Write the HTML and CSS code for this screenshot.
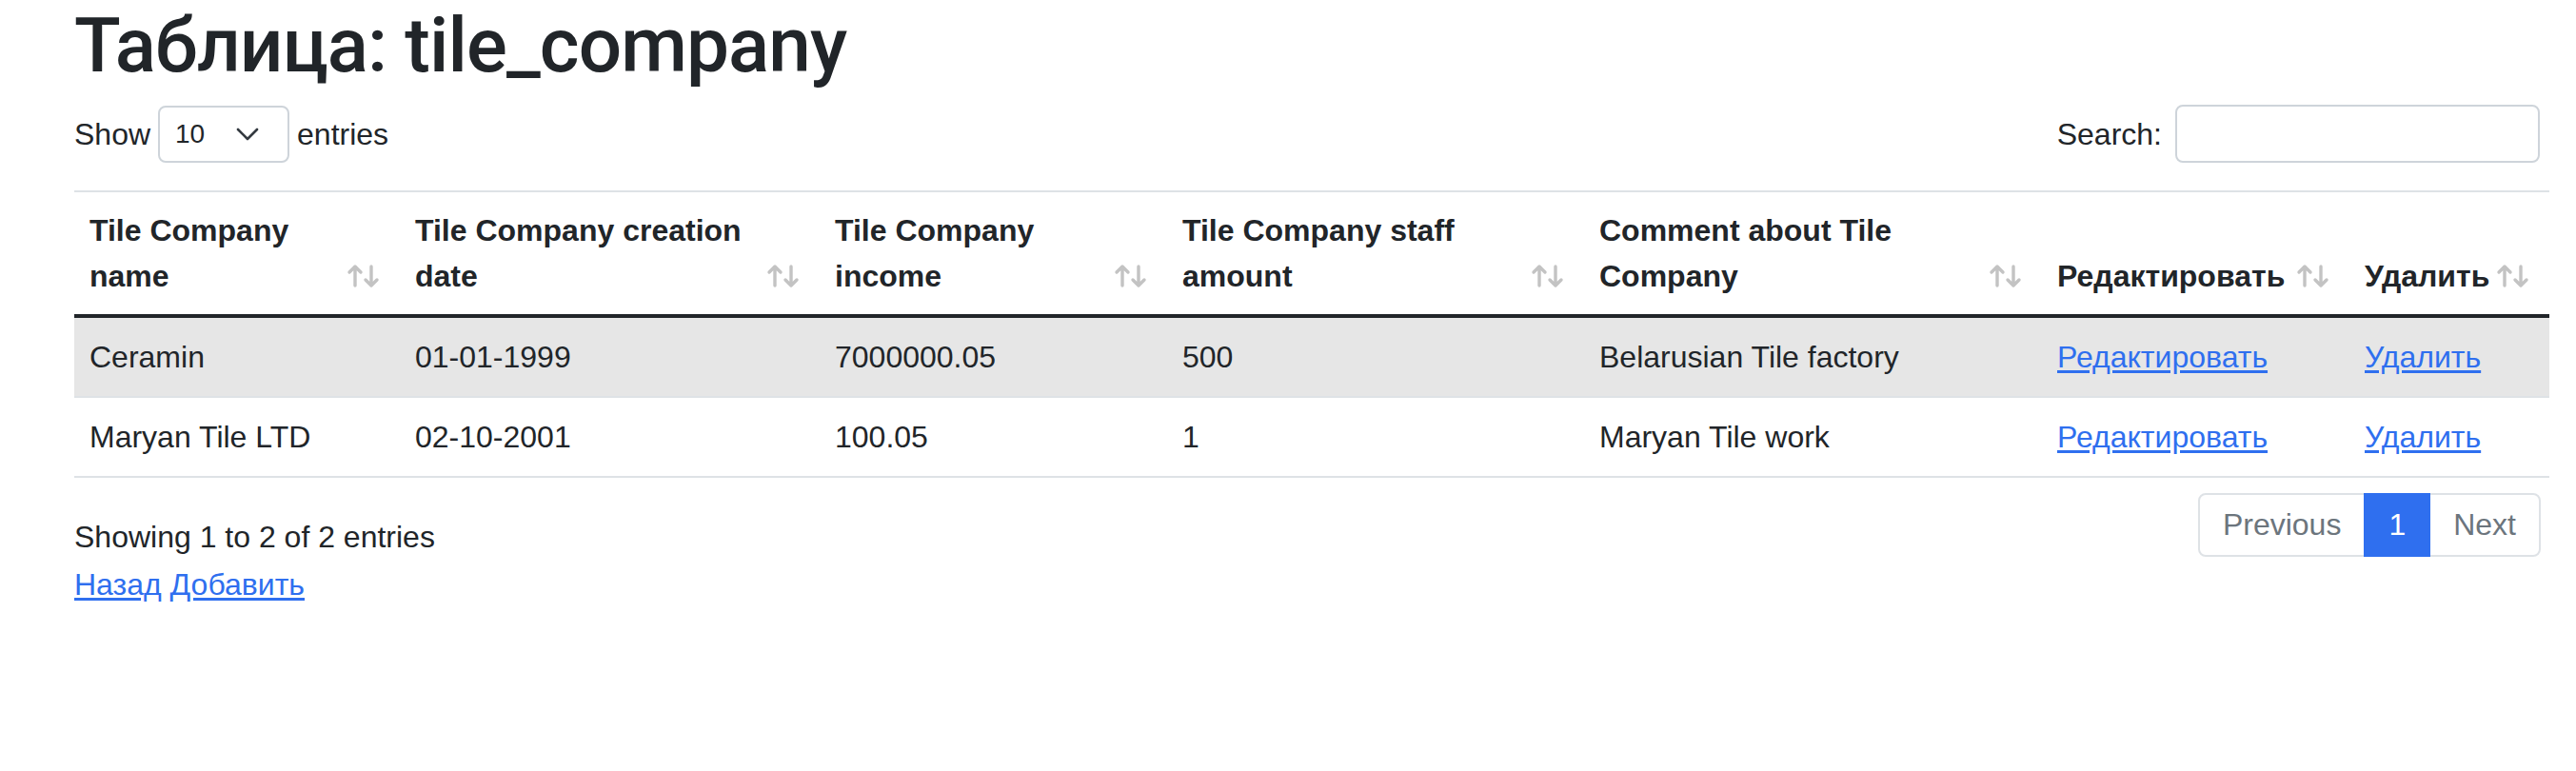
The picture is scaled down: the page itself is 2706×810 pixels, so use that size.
FILE: index.html
```html
<!DOCTYPE html>
<html lang="ru">
<head>
<meta charset="utf-8">
<title>Таблица: tile_company</title>
<link rel="stylesheet" href="styles.css">
</head>
<body>
<div class="page">
  <h1 class="title">Таблица: tile_company</h1>

  <div class="dt-top">
    <div class="dt-length">Show <span class="select"><span class="select-value">10</span><svg class="chev" width="24" height="14" viewBox="0 0 24 14"><polyline points="2,2 12,12 22,2" fill="none" stroke="#343a40" stroke-width="2.6" stroke-linecap="round" stroke-linejoin="round"/></svg></span> entries</div>
    <div class="dt-search">Search: <span class="search-input"></span></div>
  </div>

  <table class="dt">
    <colgroup>
      <col class="c1"><col class="c2"><col class="c3"><col class="c4"><col class="c5"><col class="c6"><col class="c7">
    </colgroup>
    <thead>
      <tr>
        <th>Tile Company name<svg class="sort" width="36" height="26" viewBox="0 0 36 26"><g fill="none" stroke="#c3c3c3" stroke-width="3.4" stroke-linecap="round" stroke-linejoin="round"><path d="M9 23V3M3 9l6-6 6 6"/><path d="M26 3v20M20 17l6 6 6-6"/></g></svg></th>
        <th>Tile Company creation date<svg class="sort" width="36" height="26" viewBox="0 0 36 26"><g fill="none" stroke="#c3c3c3" stroke-width="3.4" stroke-linecap="round" stroke-linejoin="round"><path d="M9 23V3M3 9l6-6 6 6"/><path d="M26 3v20M20 17l6 6 6-6"/></g></svg></th>
        <th>Tile Company income<svg class="sort" width="36" height="26" viewBox="0 0 36 26"><g fill="none" stroke="#c3c3c3" stroke-width="3.4" stroke-linecap="round" stroke-linejoin="round"><path d="M9 23V3M3 9l6-6 6 6"/><path d="M26 3v20M20 17l6 6 6-6"/></g></svg></th>
        <th>Tile Company staff amount<svg class="sort" width="36" height="26" viewBox="0 0 36 26"><g fill="none" stroke="#c3c3c3" stroke-width="3.4" stroke-linecap="round" stroke-linejoin="round"><path d="M9 23V3M3 9l6-6 6 6"/><path d="M26 3v20M20 17l6 6 6-6"/></g></svg></th>
        <th>Comment about Tile Company<svg class="sort" width="36" height="26" viewBox="0 0 36 26"><g fill="none" stroke="#c3c3c3" stroke-width="3.4" stroke-linecap="round" stroke-linejoin="round"><path d="M9 23V3M3 9l6-6 6 6"/><path d="M26 3v20M20 17l6 6 6-6"/></g></svg></th>
        <th class="nowrap">Редактировать<svg class="sort" width="36" height="26" viewBox="0 0 36 26"><g fill="none" stroke="#c3c3c3" stroke-width="3.4" stroke-linecap="round" stroke-linejoin="round"><path d="M9 23V3M3 9l6-6 6 6"/><path d="M26 3v20M20 17l6 6 6-6"/></g></svg></th>
        <th class="nowrap">Удалить<svg class="sort" width="36" height="26" viewBox="0 0 36 26"><g fill="none" stroke="#c3c3c3" stroke-width="3.4" stroke-linecap="round" stroke-linejoin="round"><path d="M9 23V3M3 9l6-6 6 6"/><path d="M26 3v20M20 17l6 6 6-6"/></g></svg></th>
      </tr>
    </thead>
    <tbody>
      <tr class="odd">
        <td>Ceramin</td>
        <td>01-01-1999</td>
        <td>7000000.05</td>
        <td>500</td>
        <td>Belarusian Tile factory</td>
        <td><a href="#">Редактировать</a></td>
        <td><a href="#">Удалить</a></td>
      </tr>
      <tr>
        <td>Maryan Tile LTD</td>
        <td>02-10-2001</td>
        <td>100.05</td>
        <td>1</td>
        <td>Maryan Tile work</td>
        <td><a href="#">Редактировать</a></td>
        <td><a href="#">Удалить</a></td>
      </tr>
    </tbody>
  </table>

  <div class="dt-bottom">
    <div class="dt-info">Showing 1 to 2 of 2 entries</div>
    <ul class="pagination">
      <li class="page-item disabled"><span class="page-link">Previous</span></li>
      <li class="page-item active"><span class="page-link">1</span></li>
      <li class="page-item disabled"><span class="page-link">Next</span></li>
    </ul>
  </div>

  <div class="links"><a href="#">Назад</a> <a href="#">Добавить</a></div>
</div>
</body>
</html>
```

FILE: styles.css
```css
html, body {
  margin: 0;
  padding: 0;
  background: #fff;
}

body {
  font-family: "Liberation Sans", Arial, sans-serif;
  font-size: 32px;
  line-height: 1.5;
  color: #212529;
}

.page {
  padding: 0 38px 0 78px;
}

.title {
  margin: 0 0 14px;
  font-family: Roboto, "Liberation Sans", Arial, sans-serif;
  font-size: 80px;
  font-weight: 500;
  line-height: 96px;
  letter-spacing: -0.9px;
}

a {
  color: #2f6fef;
  text-decoration: underline;
  text-underline-offset: 3px;
}

/* top controls */
.dt-top {
  display: flex;
  justify-content: space-between;
  align-items: center;
  height: 61px;
}

.dt-length {
  display: flex;
  align-items: center;
  gap: 8px;
}

.select {
  display: flex;
  align-items: center;
  justify-content: space-between;
  box-sizing: border-box;
  width: 138px;
  height: 60px;
  padding: 0 30px 0 16px;
  border: 2px solid #ced4da;
  border-radius: 8px;
  font-size: 28px;
  line-height: 1;
}

.chev {
  display: block;
}

.dt-search {
  display: flex;
  align-items: center;
  gap: 14px;
}

.search-input {
  display: block;
  box-sizing: border-box;
  width: 383px;
  height: 61px;
  border: 2px solid #ced4da;
  border-radius: 8px;
}

/* table */
.dt {
  width: 2600px;
  margin-top: 29px;
  border-collapse: separate;
  border-spacing: 0;
  table-layout: fixed;
}

.c1 { width: 342px; }
.c2 { width: 441px; }
.c3 { width: 365px; }
.c4 { width: 438px; }
.c5 { width: 481px; }
.c6 { width: 323px; }
.c7 { width: 210px; }

.dt th {
  position: relative;
  padding: 16px 60px 16px 16px;
  text-align: left;
  vertical-align: bottom;
  font-weight: 700;
  line-height: 48px;
  border-top: 2px solid #dee2e6;
  border-bottom: 4px solid #212529;
}

.dt th.nowrap {
  white-space: nowrap;
}

.sort {
  position: absolute;
  right: 20px;
  bottom: 27px;
}

.dt td {
  padding: 17px 16px;
  line-height: 48px;
  border-bottom: 2px solid #dee2e6;
  white-space: nowrap;
}

.dt tr.odd td {
  background: #e6e6e6;
}

/* bottom */
.dt-bottom {
  display: flex;
  justify-content: space-between;
  align-items: flex-start;
  margin-top: 16px;
}

.dt-info {
  padding-top: 22px;
  line-height: 48px;
}

.pagination {
  display: flex;
  margin: 0 -1px 0 0;
  padding: 0;
  list-style: none;
}

.page-link {
  display: block;
  padding: 12px 24px;
  line-height: 39px;
  border: 2px solid #dee2e6;
  color: #6c757d;
  background: #fff;
}

.page-item + .page-item .page-link {
  margin-left: -2px;
}

.page-item:first-child .page-link {
  border-radius: 8px 0 0 8px;
}

.page-item:last-child .page-link {
  border-radius: 0 8px 8px 0;
}

.page-item.active .page-link {
  position: relative;
  background: #2f6fef;
  border-color: #2f6fef;
  color: #fff;
}

.links {
  margin-top: 2px;
  line-height: 48px;
}
```
